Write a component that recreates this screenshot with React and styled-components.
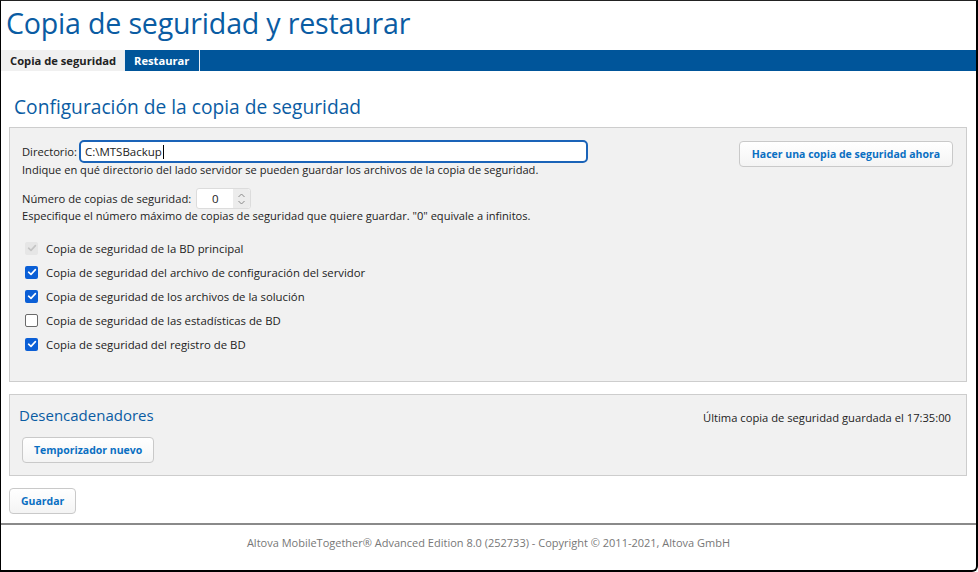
import React from "react";
import styled, { createGlobalStyle } from "styled-components";

const Global = createGlobalStyle`
  html, body { margin: 0; padding: 0; background: #fff; }
  body { font-family: "Open Sans", "Noto Sans", sans-serif; }
  * { box-sizing: border-box; }
`;

const Frame = styled.div`
  width: 978px;
  height: 572px;
  border-left: 1px solid #000;
  border-right: 2px solid #000;
  border-bottom: 2px solid #000;
  border-top: 1px solid #222;
  border-bottom-right-radius: 6px;
  display: flex;
  flex-direction: column;
  overflow: hidden;
  background: #fff;
`;

const Title = styled.h1`
  margin: 0;
  padding: 2px 0 0 5px;
  height: 49px;
  font-weight: 400;
  font-size: 28.6px;
  line-height: 40px;
  color: #0a5ca3;
  letter-spacing: -0.2px;
`;

const TabBar = styled.div`
  display: flex;
  background: #00559a;
  height: 21px;
`;

const Tab = styled.div`
  padding-left: 9px;
  font-size: 11.2px;
  font-weight: 700;
  line-height: 21px;
  white-space: nowrap;
  overflow: hidden;
  color: ${(p) => (p.$active ? "#222" : "#fff")};
  background: ${(p) => (p.$active ? "#f0f0f0" : "transparent")};
  border-right: 1px solid #e8eef5;
  width: ${(p) => p.$w}px;
`;

const Main = styled.div`
  flex: 1;
  padding: 0 9px 0 8px;
  display: flex;
  flex-direction: column;
`;

const Heading = styled.h2`
  margin: 0;
  padding: 23px 0 0 5px;
  height: 56px;
  font-size: 19.2px;
  font-weight: 400;
  line-height: 26px;
  color: #0a5ca3;
`;

const Panel = styled.div`
  background: #f1f1f1;
  border: 1px solid #cdcdcd;
  height: ${(p) => p.$h}px;
  padding: ${(p) => p.$pad};
  display: flex;
  flex-direction: column;
`;

const TopRow = styled.div`
  display: flex;
  justify-content: space-between;
  align-items: flex-start;
`;

const Fields = styled.div`
  display: flex;
  flex-direction: column;
`;

const FieldRow = styled.div`
  display: flex;
  align-items: center;
  gap: 2px;
  font-size: 11.2px;
  color: #222;
  margin-top: ${(p) => p.$mt || 0}px;
`;

const TextInput = styled.div`
  width: 509px;
  height: 23px;
  border: 2px solid #1a63b8;
  border-radius: 5px;
  background: #fff;
  font-size: 11.5px;
  line-height: 19px;
  padding-left: 4px;
  color: #222;
  display: flex;
  align-items: center;
`;

const Caret = styled.span`
  display: inline-block;
  width: 1px;
  height: 14px;
  background: #000;
  margin-left: 1px;
`;

const Help = styled.div`
  font-size: 11.1px;
  color: #222;
  margin-top: ${(p) => p.$mt || 0}px;
`;

const Spinner = styled.div`
  width: 55px;
  height: 21px;
  border: 1px solid #dcdcdc;
  border-radius: 3px;
  background: #fff;
  display: flex;
  margin-left: 3px;
`;

const SpinValue = styled.div`
  flex: 1;
  text-align: center;
  font-size: 11.5px;
  line-height: 19px;
  color: #222;
`;

const SpinArrows = styled.div`
  width: 17px;
  background: #ececec;
  display: flex;
  align-items: center;
  justify-content: center;
  border-radius: 0 3px 3px 0;
`;

const Button = styled.button`
  font-family: inherit;
  font-size: 10.5px;
  font-weight: 700;
  color: #0a6fc2;
  background: linear-gradient(#ffffff, #f4f4f4);
  border: 1px solid #c9c9c9;
  border-radius: 4px;
  height: 26px;
  padding: 0 ${(p) => p.$px || 11}px;
  margin-top: ${(p) => p.$mt || 0}px;
  cursor: pointer;
`;

const Checks = styled.div`
  display: flex;
  flex-direction: column;
  gap: 4px;
  margin-top: 15px;
  margin-left: 3px;
`;

const CheckRow = styled.label`
  display: flex;
  align-items: center;
  gap: 8px;
  height: 20px;
  font-size: 11.35px;
  color: #222;
`;

const Box = styled.span`
  width: 13px;
  height: 13px;
  border-radius: 2px;
  display: flex;
  align-items: center;
  justify-content: center;
  background: ${(p) => (p.$disabled ? "#e6e6e6" : p.$on ? "#0b5fd6" : "#fff")};
  border: ${(p) => (p.$on || p.$disabled ? "none" : "1.5px solid #6a6a6a")};
`;

const TriggerHead = styled.div`
  display: flex;
  justify-content: space-between;
  align-items: center;
  height: 24px;
`;

const SubHeading = styled.div`
  font-size: 15px;
  color: #0a5ca3;
`;

const Status = styled.div`
  font-size: 11.2px;
  color: #222;
  margin-right: 6px;
  margin-top: 4px;
`;

const TriggerActions = styled.div`
  margin-top: 10px;
  margin-left: 3px;
`;

const Gap = styled.div`
  height: 12px;
`;

const SaveRow = styled.div`
  padding-top: 12px;
`;

const Spacer = styled.div`
  flex: 1;
`;

const Footer = styled.div`
  border-top: 2px solid #8a8a8a;
  height: 47px;
  display: flex;
  justify-content: center;
  padding-top: 10px;
  font-size: 11px;
  color: #777;
`;

const Check = ({ on, disabled }) => (
  <Box $on={on} $disabled={disabled}>
    {(on || disabled) && (
      <svg width="10" height="10" viewBox="0 0 10 10">
        <path d="M1.6 5.2 L4 7.4 L8.4 2.6" fill="none" stroke={disabled ? "#c4c4c4" : "#fff"} strokeWidth="1.6" strokeLinecap="round" strokeLinejoin="round" />
      </svg>
    )}
  </Box>
);

const items = [
  { t: "Copia de seguridad de la BD principal", on: true, disabled: true },
  { t: "Copia de seguridad del archivo de configuración del servidor", on: true },
  { t: "Copia de seguridad de los archivos de la solución", on: true },
  { t: "Copia de seguridad de las estadísticas de BD", on: false },
  { t: "Copia de seguridad del registro de BD", on: true },
];

export default function App() {
  return (
    <>
      <Global />
      <Frame>
        <Title>Copia de seguridad y restaurar</Title>
        <TabBar>
          <Tab $active $w={124}>Copia de seguridad</Tab>
          <Tab $w={75}>Restaurar</Tab>
        </TabBar>
        <Main>
          <Heading>Configuración de la copia de seguridad</Heading>
          <Panel $h={255} $pad="12px 13px 0 12px">
            <TopRow>
              <Fields>
                <FieldRow>
                  Directorio:
                  <TextInput>
                    C:\MTSBackup<Caret />
                  </TextInput>
                </FieldRow>
                <Help $mt={-1}>Indique en qué directorio del lado servidor se pueden guardar los archivos de la copia de seguridad.</Help>
                <FieldRow $mt={11}>
                  Número de copias de seguridad:
                  <Spinner>
                    <SpinValue>0</SpinValue>
                    <SpinArrows>
                      <svg width="9" height="14" viewBox="0 0 9 14">
                        <path d="M1.5 5 L4.5 2 L7.5 5 M1.5 9 L4.5 12 L7.5 9" fill="none" stroke="#8a8a8a" strokeWidth="1" />
                      </svg>
                    </SpinArrows>
                  </Spinner>
                </FieldRow>
                <Help $mt={-1}>Especifique el número máximo de copias de seguridad que quiere guardar. "0" equivale a infinitos.</Help>
              </Fields>
              <Button $px={12} $mt={1}>Hacer una copia de seguridad ahora</Button>
            </TopRow>
            <Checks>
              {items.map((it) => (
                <CheckRow key={it.t}>
                  <Check on={it.on} disabled={it.disabled} />
                  {it.t}
                </CheckRow>
              ))}
            </Checks>
          </Panel>
          <Gap />
          <Panel $h={82} $pad="8px 9px 0 9px">
            <TriggerHead>
              <SubHeading>Desencadenadores</SubHeading>
              <Status>Última copia de seguridad guardada el 17:35:00</Status>
            </TriggerHead>
            <TriggerActions>
              <Button $px={11}>Temporizador nuevo</Button>
            </TriggerActions>
          </Panel>
          <SaveRow>
            <Button $px={11}>Guardar</Button>
          </SaveRow>
          <Spacer />
        </Main>
        <Footer>Altova MobileTogether® Advanced Edition 8.0 (252733) - Copyright © 2011-2021, Altova GmbH</Footer>
      </Frame>
    </>
  );
}
